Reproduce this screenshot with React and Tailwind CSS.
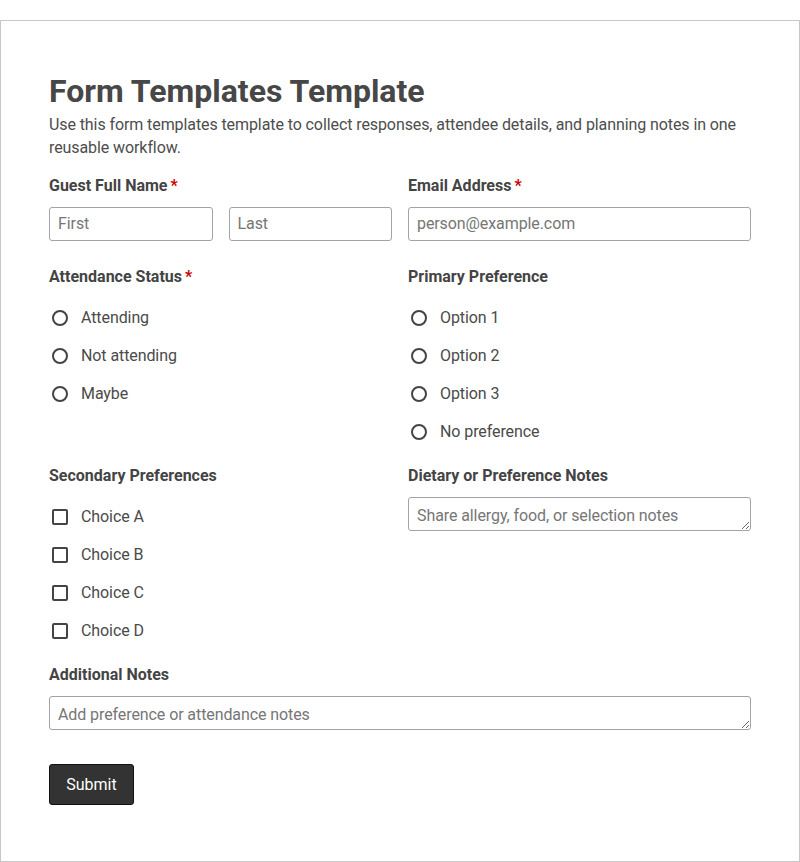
const radioGroups = {
  attendance: ["Attending", "Not attending", "Maybe"],
  primary: ["Option 1", "Option 2", "Option 3", "No preference"],
};

const choices = ["Choice A", "Choice B", "Choice C", "Choice D"];

function Label({ children, required }) {
  return (
    <div className="h-6 leading-[26px] font-bold text-base text-[#444]">
      {children}
      {required && <span className="ml-[3px] text-[#c00]">*</span>}
    </div>
  );
}

function TextInput({ placeholder, className = "" }) {
  return (
    <input
      type="text"
      placeholder={placeholder}
      className={`h-[34px] w-full rounded-[3px] border border-[#a3a3a3] px-2 pb-px text-base tracking-[-0.09px] text-[#444] placeholder:text-[#767676] outline-none ${className}`}
    />
  );
}

function Notes({ placeholder }) {
  return (
    <textarea
      rows={1}
      placeholder={placeholder}
      className="mt-[10px] block h-[34px] w-full rounded-[3px] border border-[#a3a3a3] px-2 pt-[7px] pb-[3px] text-base leading-[22px] tracking-[-0.09px] text-[#444] placeholder:text-[#767676] outline-none"
    />
  );
}

function RadioList({ name, options }) {
  return (
    <div className="mt-[16px] flex flex-col gap-[10px]">
      {options.map((opt) => (
        <label key={opt} className="flex h-[28px] items-center">
          <input type="radio" name={name} className="sr-only" />
          <span className="ml-[3px] h-4 w-4 rounded-full border-2 border-[#444]" />
          <span className="ml-[13px] text-base tracking-[-0.09px] text-[#4a4a4a]">{opt}</span>
        </label>
      ))}
    </div>
  );
}

function CheckList({ options }) {
  return (
    <div className="mt-[16px] flex flex-col gap-[10px]">
      {options.map((opt) => (
        <label key={opt} className="flex h-[28px] items-center">
          <input type="checkbox" className="sr-only" />
          <span className="ml-[3px] h-4 w-4 rounded-[2px] border-2 border-[#444]" />
          <span className="ml-[13px] text-base tracking-[-0.09px] text-[#4a4a4a]">{opt}</span>
        </label>
      ))}
    </div>
  );
}

export default function App() {
  return (
    <div className="pt-5 bg-white font-['Roboto',sans-serif] text-[#444]">
      <form className="border border-[#c8c8c8] px-12 pt-[50px] pb-14">
        <h1 className="text-[32px] leading-[40px] font-bold text-[#474747]">Form Templates Template</h1>
        <p className="mt-[2px] text-base leading-[23px] tracking-[-0.09px] text-[#4d4d4d]">
          Use this form templates template to collect responses, attendee details, and planning notes in one
          reusable workflow.
        </p>

        <div className="mt-[14px] grid grid-cols-2 gap-x-4">
          <div>
            <Label required>Guest Full Name</Label>
            <div className="mt-[10px] grid grid-cols-2 gap-4">
              <TextInput placeholder="First" />
              <TextInput placeholder="Last" />
            </div>
          </div>
          <div>
            <Label required>Email Address</Label>
            <TextInput placeholder="person@example.com" className="mt-[10px]" />
          </div>
        </div>

        <div className="mt-[23px] grid grid-cols-2 gap-x-4">
          <div>
            <Label required>Attendance Status</Label>
            <RadioList name="attendance" options={radioGroups.attendance} />
          </div>
          <div>
            <Label>Primary Preference</Label>
            <RadioList name="primary" options={radioGroups.primary} />
          </div>
        </div>

        <div className="mt-[17px] grid grid-cols-2 gap-x-4">
          <div>
            <Label>Secondary Preferences</Label>
            <CheckList options={choices} />
          </div>
          <div>
            <Label>Dietary or Preference Notes</Label>
            <Notes placeholder="Share allergy, food, or selection notes" />
          </div>
        </div>

        <div className="mt-[17px]">
          <Label>Additional Notes</Label>
          <Notes placeholder="Add preference or attendance notes" />
        </div>

        <button
          type="button"
          className="mt-[34px] h-[41px] w-[85px] rounded-[3px] border border-[#111] bg-[#333] text-base text-white"
        >
          Submit
        </button>
      </form>
    </div>
  );
}
